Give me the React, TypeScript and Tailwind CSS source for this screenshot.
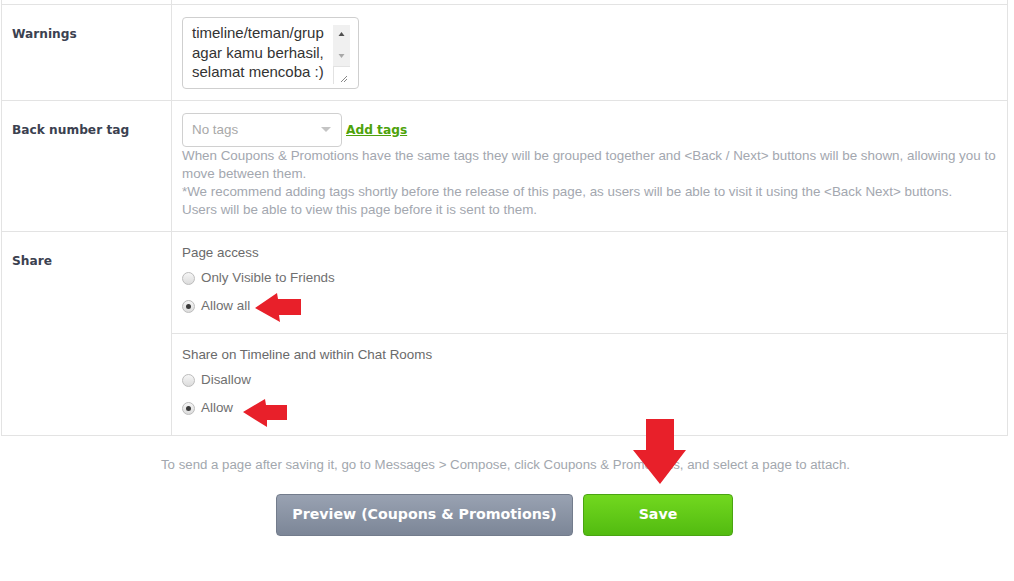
import React from "react";

const body = { fontFamily: '"Liberation Sans", Arial, sans-serif' };
const boldF = { fontFamily: '"DejaVu Sans", Verdana, sans-serif' };

function Radio({ checked, label }: { checked?: boolean; label: string }) {
  return (
    <div className="flex items-center h-[28px]">
      <span className="relative w-[13px] h-[13px] rounded-full border border-[#bcbcbc] bg-gradient-to-b from-[#f6f6f6] to-[#dcdcdc] flex items-center justify-center">
        {checked && <span className="w-[5px] h-[5px] rounded-full bg-[#3a3a3a]" />}
      </span>
      <span className="ml-[6px] text-[13.4px] text-[#707070]">{label}</span>
    </div>
  );
}

function Label({ children }: { children: React.ReactNode }) {
  return (
    <div className="border-r border-[#e3e3e3] pl-[10px] pt-[20px] text-[12.2px] leading-[18px] font-bold text-[#3b4150]" style={boldF}>
      {children}
    </div>
  );
}

export default function App() {
  return (
    <div className="relative w-[1014px] h-[581px] bg-white overflow-hidden" style={body}>
      <div className="ml-[1px] w-[1007px] border-l border-r border-[#e3e3e3]">
        {/* top sliver of previous row */}
        <div className="grid grid-cols-[170px_1fr] h-[4px]">
          <div className="border-r border-[#e3e3e3]" />
          <div />
        </div>
        {/* Warnings */}
        <div className="grid grid-cols-[170px_1fr] h-[96px] border-t border-[#e3e3e3]">
          <Label>Warnings</Label>
          <div className="pl-[10px] pt-[12px]">
            <div className="relative w-[177px] h-[72px] rounded-[4px] border border-[#cfcfcf] bg-white overflow-hidden">
              <div className="pl-[9px] pt-[5px] text-[15px] leading-[19.5px] text-[#333] whitespace-pre" style={body}>
                {"timeline/teman/grup\nagar kamu berhasil,\nselamat mencoba :)"}
              </div>
              <div className="absolute right-[8px] top-[7px] w-[17px] h-[41px] bg-[#f0f0f0] flex flex-col items-center">
                <svg width="17" height="14" viewBox="0 0 17 14" className="mt-[2px]">
                  <path d="M5.5 9 L8.5 5 L11.5 9 Z" fill="#505050" />
                </svg>
                <svg width="17" height="14" viewBox="0 0 17 14" className="mt-[8px]">
                  <path d="M5.5 5 L8.5 9 L11.5 5 Z" fill="#a8a8a8" />
                </svg>
              </div>
              <div className="absolute right-[8px] top-[48px] w-[17px] h-[18px] bg-white border-l border-t border-[#e2e2e2]">
                <svg width="16" height="17" viewBox="0 0 16 17">
                  <path d="M13 9 L7 15 M13 12 L10 15" stroke="#888" strokeWidth="1" />
                </svg>
              </div>
            </div>
          </div>
        </div>
        {/* Back number tag */}
        <div className="grid grid-cols-[170px_1fr] h-[131px] border-t border-[#e3e3e3]">
          <Label>Back number tag</Label>
          <div className="pl-[10px] pt-[12px]">
            <div className="flex items-center">
              <div className="w-[160px] h-[34px] rounded-[4px] border border-[#d0d0d0] flex items-center justify-between pl-[9px] pr-[10px]">
                <span className="text-[13.4px] text-[#a8a8a8]">No tags</span>
                <svg width="10" height="6" viewBox="0 0 10 6">
                  <path d="M0 0 L10 0 L5 5 Z" fill="#c4c4c4" />
                </svg>
              </div>
              <a className="ml-[4px] text-[12.2px] font-bold text-[#4ea20b] underline" style={boldF}>Add tags</a>
            </div>
            <div className="text-[13.4px] leading-[18px] text-[#a3a7af] pr-[6px]">
              <p>When Coupons &amp; Promotions have the same tags they will be grouped together and &lt;Back / Next&gt; buttons will be shown, allowing you to move between them.</p>
              <p>*We recommend adding tags shortly before the release of this page, as users will be able to visit it using the &lt;Back Next&gt; buttons.</p>
              <p>Users will be able to view this page before it is sent to them.</p>
            </div>
          </div>
        </div>
        {/* Share */}
        <div className="grid grid-cols-[170px_1fr] border-t border-b border-[#e3e3e3]">
          <Label>Share</Label>
          <div>
            <div className="h-[101px] pl-[10px] pt-[12px]">
              <div className="text-[13.4px] leading-[18px] text-[#6a6a6a]">Page access</div>
              <div className="mt-[2px]">
                <Radio label="Only Visible to Friends" />
                <Radio checked label="Allow all" />
              </div>
            </div>
            <div className="h-[102px] pl-[10px] pt-[12px] border-t border-[#e3e3e3]">
              <div className="text-[13.4px] leading-[18px] text-[#6a6a6a]">Share on Timeline and within Chat Rooms</div>
              <div className="mt-[2px]">
                <Radio label="Disallow" />
                <Radio checked label="Allow" />
              </div>
            </div>
          </div>
        </div>
      </div>

      <p className="mt-[19px] text-center text-[13.25px] text-[#a2a7ae] pr-[3px]">
        To send a page after saving it, go to Messages &gt; Compose, click Coupons &amp; Promotions, and select a page to attach.
      </p>

      <div className="mt-[19px] flex justify-center gap-[10px] pr-[5px]">
        <button className="w-[297px] h-[42px] rounded-[4px] border border-[#737c8c] bg-gradient-to-b from-[#99a2b2] to-[#7c8697] text-white text-[14.2px] font-bold" style={boldF}>
          Preview (Coupons &amp; Promotions)
        </button>
        <button className="w-[150px] h-[42px] rounded-[4px] border border-[#4aa412] bg-gradient-to-b from-[#72d81f] to-[#52bb10] text-white text-[14.2px] font-bold" style={boldF}>
          Save
        </button>
      </div>

      {/* red annotation arrows */}
      <svg className="absolute left-0 top-0 pointer-events-none" width="1014" height="581" viewBox="0 0 1014 581">
        <path d="M255 308 L277 293 L278 299 L301 299 L301 315 L279 315 L280 322 Z" fill="#e8202a" />
        <path d="M243 412 L265 399 L266 405 L287 405 L287 420 L267 420 L267 427 Z" fill="#e8202a" />
        <path d="M646 419 L674 419 L674 450 L686 450 L660 484 L633 450 L646 450 Z" fill="#e8202a" />
      </svg>
    </div>
  );
}
